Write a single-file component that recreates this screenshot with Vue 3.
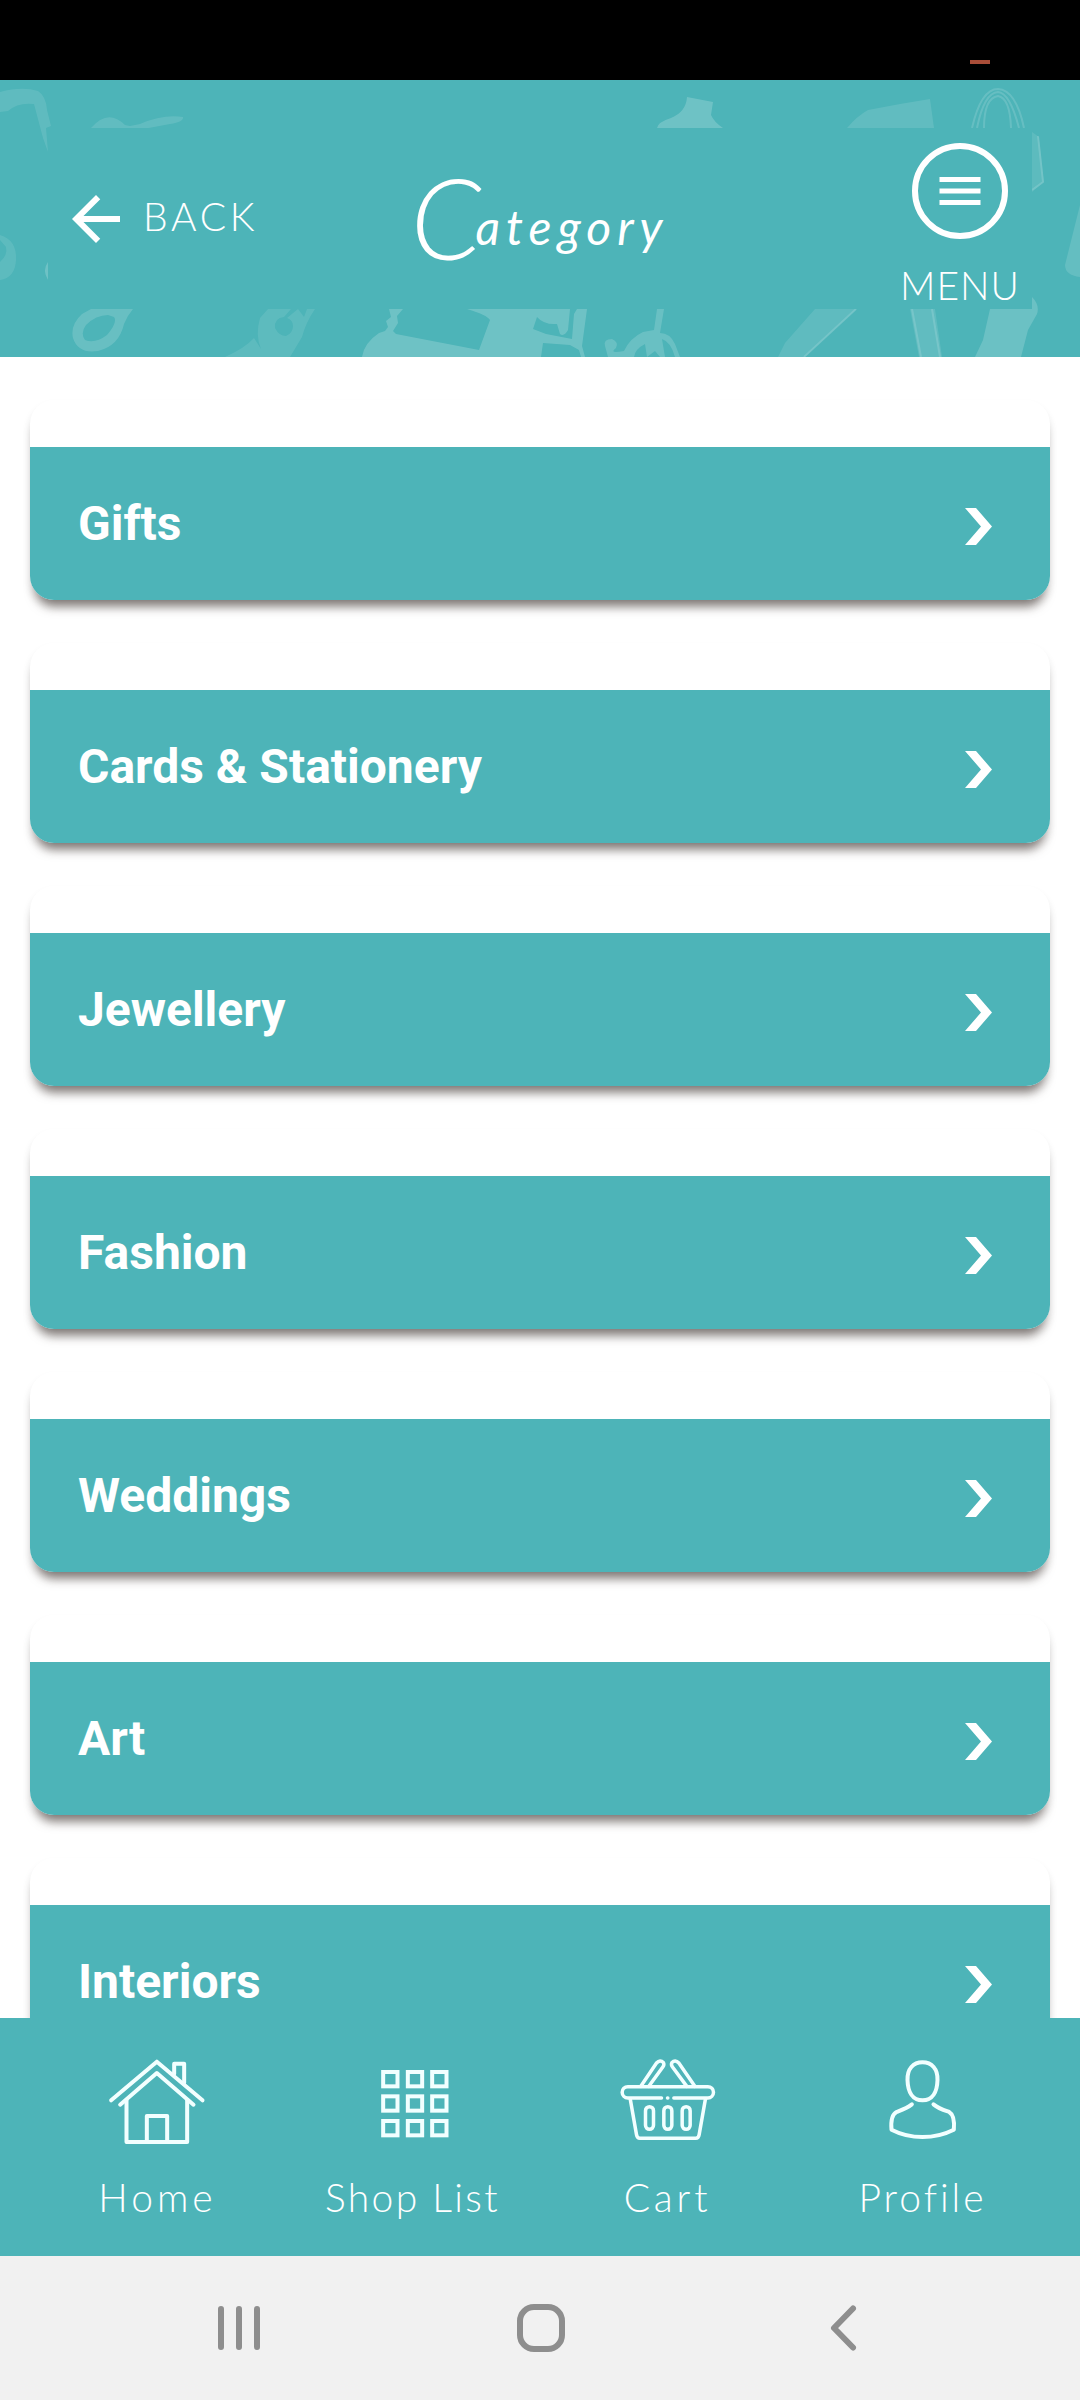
<script setup>
const categories = ['Gifts', 'Cards & Stationery', 'Jewellery', 'Fashion', 'Weddings', 'Art', 'Interiors']

const gridColumns = [963, 1037, 1110]
const gridRows = [210, 283, 357]
</script>

<template>
  <div class="screen">
    <div class="status-bar">
      <span class="status-mark"></span>
    </div>

    <header class="header">
      <svg class="pattern" viewBox="0 80 1080 277" fill="#fff">
        <g opacity="0.19">
          <path d="M0 92 Q22 86 38 91 Q46 96 47 110 L51 126 L46 128 L48 152 L43 138 L34 104 Q18 102 8 111 L0 112 Z" opacity=".55" />
          <path d="M91 128 Q108 108 125 125 L130 126 L140 124 Q163 114 183 117 Q184 122 170 124 L138 130 Z" opacity=".6" />
          <path d="M0 235 Q17 240 16 260 Q15 278 0 280 L0 262 Q8 255 6 247 L0 240 Z" opacity=".5" />
          <path d="M48 262 Q42 270 48 280 Z" />
          <path fill-rule="evenodd" d="M91 309 H133 Q127 316 124 324 Q119 346 98 351 Q78 354 73 338 Q70 325 82 314 Z M108 315 Q96 315 86 325 Q80 333 85 340 Q95 344 107 335 Q118 322 114 317 Z" opacity=".8" />
          <path fill-rule="evenodd" d="M268 309 H291 L284 317 Q274 318 275 328 Q279 336 286 336 Q293 333 293 326 Q293 320 287 318 L298 309 L304 317 L307 309 H315 Q306 322 302 337 L290 357 H225 Q245 348 254 338 L261 349 Q255 335 260 318 Z" opacity=".5" />
          <path d="M362 357 Q364 343 379 333 L385 331 L388 327 L386 321 L391 317 L389 309 H403 L397 316 L398 323 L393 331 L396 334 L479 350 L490 320 Q487 315 467 309 H570 L568 330 Q564 337 560 334 L557 324 Q544 325 537 317 L533 329 L546 334 L572 339 L574 314 L577 309 H587 L582 346 L585 357 H581 L579 350 L570 345 L543 343 L541 357 Z" />
          <path d="M605 346 Q603 339 612 339 Q619 342 616 348 Q608 354 624 351 Q630 338 643 332 L654 330 L657 309 H664 L660 333 Q670 333 675 344 L680 357 H675 Q671 342 662 339 L665 357 H660 L655 351 L647 357 L645 344 Q635 349 634 357 H608 Z" opacity=".85" />
          <path d="M657 128 Q658 122 671 118 Q686 112 687 97 L713 102 L711 115 Q714 122 723 128 Z" />
          <path d="M847 128 Q857 116 868 110 L900 104 L930 99 L934 128 Z" opacity=".6" />
          <path d="M815 309 H857 L805 357 H778 L785 343 Z" opacity=".55" />
          <path d="M910 309 H935 L942 357 H919 Z" opacity=".6" />
          <path d="M990 309 H1032 V297 Q1040 305 1037 314 L1028 330 L1021 357 H975 L983 340 Z" opacity=".9" />
          <path d="M1032 132 L1039 137 L1044 182 L1032 192 Z" opacity=".5" />
          <path d="M1080 205 L1065 265 Q1065 275 1080 277 Z" opacity=".7" />
        </g>
        <g fill="none" stroke="#fff" stroke-width="2" opacity="0.14">
          <path d="M972 128 Q981 89 998 89 Q1016 90 1024 128" />
          <path d="M977 128 Q984 93 998 92 Q1010 93 1019 128" />
          <path d="M984 128 Q984 98 998 96 Q1010 98 1011 128" />
          <path d="M912 309 L921 357 M932 309 L940 357" />
          <path d="M856 309 L804 357" />
          <path d="M1038 136 L1043 182 L1032 190" />
        </g>
      </svg>
      <div class="header-inner">
        <button class="back">
          <svg width="72" height="72" viewBox="0 0 24 24" fill="#fff">
            <path d="M20 11H7.83l5.59-5.59L12 4l-8 8 8 8 1.41-1.41L7.83 13H20v-2z" />
          </svg>
          <span class="back-text">BACK</span>
        </button>
        <h1 class="title"><span class="title-initial">C</span>ategory</h1>
        <button class="menu">
          <svg width="96" height="96" viewBox="0 0 96 96" fill="none" stroke="#fff">
            <circle cx="48" cy="48" r="45" stroke-width="6" />
            <path d="M27.5 36.5h41M27.5 48h41M27.5 59.5h41" stroke-width="5" />
          </svg>
          <span class="menu-text">MENU</span>
        </button>
      </div>
    </header>

    <main class="list">
      <div v-for="category in categories" :key="category" class="card">
        <div class="card-image"></div>
        <div class="card-footer">
          <span class="card-title">{{ category }}</span>
          <svg class="chevron" width="27" height="37" viewBox="0 0 27 37" fill="#fff">
            <path d="M0 0h11l16 18.5L11 37H0l16-18.5z" />
          </svg>
        </div>
      </div>
    </main>

    <nav class="tabs">
      <a class="tab">
        <svg class="tab-icon" viewBox="143.5 165 300 270">
          <path d="M153 301L290 185L427 301M180 314L290 219L400 314" />
          <path d="M199 300V426H381V300M260 426V348H321V426M342 222V191H372V248" />
        </svg>
        <span class="tab-label home">Home</span>
      </a>
      <a class="tab">
        <svg class="tab-icon grid" viewBox="907.5 165 300 270">
          <template v-for="y in gridRows" :key="y">
            <rect v-for="x in gridColumns" :key="x" :x="x + 5" :y="y + 6" width="43" height="43" />
          </template>
        </svg>
        <span class="tab-label shops">Shop List</span>
      </a>
      <a class="tab">
        <svg class="tab-icon basket" viewBox="173.5 165 300 270">
          <path d="M304 294H203A17 17 0 0 1 203 260H443A17 17 0 0 1 443 294H341M322 294H323" />
          <path d="M210 296L229 404Q231 415 239 415H407Q415 415 417 404L436 296" />
          <path d="M242 259L289 189Q300 177 310 188Q313 194 308 201L266 259" />
          <path d="M404 259L356 189Q345 177 335 188Q332 194 337 201L380 259" />
          <rect x="256" y="320" width="24" height="68" rx="12" />
          <rect x="311" y="320" width="24" height="68" rx="12" />
          <rect x="366" y="320" width="24" height="68" rx="12" />
        </svg>
        <span class="tab-label cart">Cart</span>
      </a>
      <a class="tab">
        <svg class="tab-icon profile" viewBox="938.5 165 300 270">
          <path d="M1087 187C1115 187 1133 207 1132 240C1131 276 1117 301 1087 301C1057 301 1043 276 1042 240C1041 207 1059 187 1087 187Z" />
          <path d="M1055 313C1038 326 1019 332 1009 336C994 344 992 365 994 389Q1037 411 1087 411Q1137 411 1181 389C1183 365 1181 344 1167 336C1156 332 1136 326 1120 313" />
        </svg>
        <span class="tab-label user">Profile</span>
      </a>
    </nav>

    <footer class="system-bar">
      <svg width="48" height="56" viewBox="0 0 48 56">
        <path d="M6 9V47M24 9V47M42 9V47" />
      </svg>
      <svg class="home-key" width="56" height="56" viewBox="0 0 56 56">
        <rect x="7" y="7" width="42" height="42" rx="14" />
      </svg>
      <svg width="36" height="56" viewBox="0 0 36 56">
        <path d="M28 8.500L9 28L28 47.500" />
      </svg>
    </footer>
  </div>
</template>

<style>
body {
  margin: 0;
}
</style>

<style scoped>
.screen {
  width: 1080px;
  height: 2400px;
  display: flex;
  flex-direction: column;
  overflow: hidden;
  background-color: #fff;
  font-family: Roboto, sans-serif;
  color: #fff;
}

.status-bar {
  flex: 0 0 80px;
  box-sizing: border-box;
  padding: 60px 90px 0 0;
  display: flex;
  justify-content: flex-end;
  background-color: #000;
}

.status-mark {
  width: 20px;
  height: 4px;
  background-color: #a84d38;
}

.header {
  position: relative;
  flex: 0 0 277px;
  box-sizing: border-box;
  padding: 48px;
  background-color: #4db4b8;
}

.pattern {
  position: absolute;
  top: 0;
  left: 0;
  width: 1080px;
  height: 277px;
}

.header-inner {
  position: relative;
  height: 181px;
  display: flex;
  justify-content: space-between;
  background-color: #4db4b8;
}

.back,
.menu {
  padding: 0;
  border: none;
  background: none;
  color: #fff;
  font-family: Lato, sans-serif;
  font-weight: 300;
  font-size: 39px;
  cursor: pointer;
}

.back {
  width: 270px;
  height: 72px;
  margin: 55px 0 0 12px;
  display: flex;
  align-items: center;
}

.back-text {
  margin: -6px 0 0 11px;
  letter-spacing: 3.7px;
}

.title {
  width: 270px;
  height: 120px;
  margin: 39px 61px 0 -73px;
  font-family: Lato, sans-serif;
  font-style: italic;
  font-weight: 400;
  font-size: 48px;
  line-height: 120px;
  letter-spacing: 6px;
  white-space: nowrap;
}

.title-initial {
  font-size: 113px;
  font-weight: 300;
  line-height: 0;
  vertical-align: -15px;
  letter-spacing: -6px;
}

.menu {
  width: 130px;
  margin: 15px 7px 0 0;
  display: flex;
  flex-direction: column;
  align-items: center;
}

.menu-text {
  margin-top: 22px;
  line-height: 48px;
  letter-spacing: 1px;
}

.list {
  flex: 0 0 1661px;
  box-sizing: border-box;
  padding: 43px 30px 0;
  display: flex;
  flex-direction: column;
  gap: 43px;
  overflow: hidden;
}

.card {
  flex: 0 0 200px;
  border-radius: 24px;
  background-color: #fff;
  box-shadow: 0 12px 11px -6px rgba(50, 38, 33, 0.6), 0 6px 8px rgba(0, 0, 0, 0.09);
  overflow: hidden;
}

.card-image {
  height: 47px;
}

.card-footer {
  height: 153px;
  box-sizing: border-box;
  padding: 0 58px 0 48px;
  display: flex;
  align-items: center;
  justify-content: space-between;
  background-color: #4db4b8;
}

.card-title {
  font-size: 48px;
  font-weight: 700;
  line-height: 56px;
}

.chevron {
  margin-top: 6px;
}

.tabs {
  position: relative;
  flex: 0 0 238px;
  box-sizing: border-box;
  padding: 37px 30px 0;
  display: flex;
  background-color: #4db4b8;
}

.tab {
  width: 255px;
  display: flex;
  flex-direction: column;
  align-items: center;
}

.tab-icon {
  width: 100px;
  height: 90px;
  fill: none;
  stroke: #f2ffff;
  stroke-width: 12;
  stroke-linecap: round;
  stroke-linejoin: round;
}

.tab-icon.grid {
  stroke-linejoin: miter;
}

.tab-icon.basket {
  stroke-width: 10.500;
}

.tab-label {
  margin-top: 28px;
  font-family: Lato, sans-serif;
  font-size: 39px;
  font-weight: 300;
  line-height: 48px;
  white-space: nowrap;
}

.tab-label.home {
  letter-spacing: 4px;
}

.tab-label.shops {
  letter-spacing: 2.3px;
}

.tab-label.cart {
  letter-spacing: 3.8px;
}

.tab-label.user {
  letter-spacing: 3px;
}

.system-bar {
  flex: 0 0 144px;
  box-sizing: border-box;
  padding: 0 219px 0 215px;
  display: flex;
  align-items: center;
  justify-content: space-between;
  background-color: #f1f1f1;
}

.system-bar svg {
  fill: none;
  stroke: #8e8e8e;
  stroke-width: 6;
  stroke-linecap: round;
  stroke-linejoin: round;
}

.system-bar .home-key {
  margin: 0 3px 0 -3px;
}
</style>
